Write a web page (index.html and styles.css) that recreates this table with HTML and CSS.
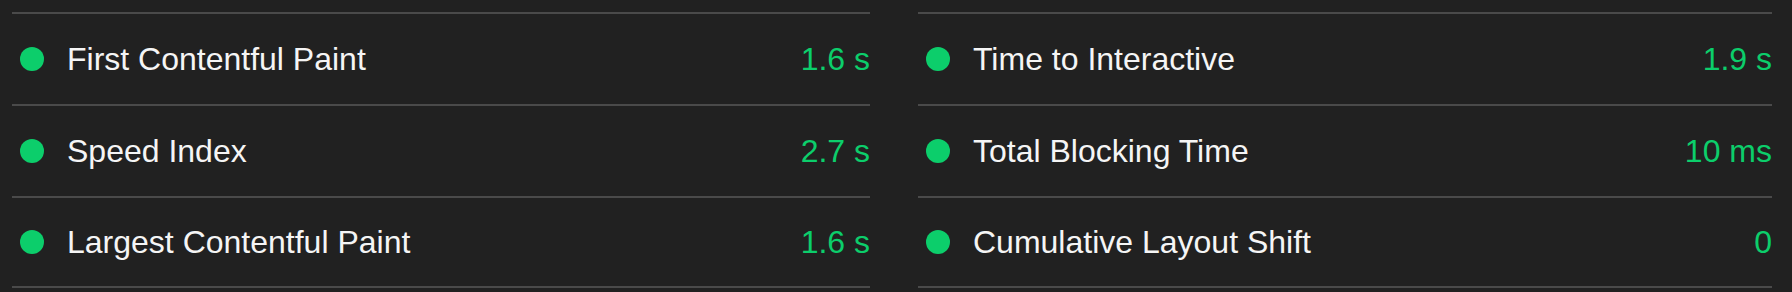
FILE: index.html
```html
<!DOCTYPE html>
<html lang="en">
<head>
<meta charset="utf-8">
<title>Metrics</title>
<link rel="stylesheet" href="styles.css">
</head>
<body>
<div class="metrics">
  <div class="col col-left">
    <div class="metric"><span class="dot"></span><span class="label">First Contentful Paint</span><span class="value">1.6 s</span></div>
    <div class="metric"><span class="dot"></span><span class="label">Speed Index</span><span class="value">2.7 s</span></div>
    <div class="metric last"><span class="dot"></span><span class="label">Largest Contentful Paint</span><span class="value">1.6 s</span></div>
  </div>
  <div class="col col-right">
    <div class="metric"><span class="dot"></span><span class="label">Time to Interactive</span><span class="value">1.9 s</span></div>
    <div class="metric"><span class="dot"></span><span class="label">Total Blocking Time</span><span class="value">10 ms</span></div>
    <div class="metric last"><span class="dot"></span><span class="label">Cumulative Layout Shift</span><span class="value">0</span></div>
  </div>
</div>
</body>
</html>
```
FILE: styles.css
```css
html, body {
  margin: 0;
  padding: 0;
  background: #212121;
}
body {
  font-family: "Liberation Sans", Arial, Helvetica, sans-serif;
  color: #f5f5f5;
  font-size: 32px;
}
.metrics {
  display: grid;
  grid-template-columns: 858px 854px;
  column-gap: 48px;
  padding: 12px 0 0 12px;
}
.col {
  display: flex;
  flex-direction: column;
}
.metric {
  display: flex;
  align-items: center;
  height: 90px;
  border-top: 2px solid #4a4a4a;
}
.metric.last {
  height: 88px;
  border-bottom: 2px solid #4a4a4a;
}
.dot {
  width: 24px;
  height: 24px;
  border-radius: 50%;
  background: #0cce6b;
  margin: 0 23px 0 8px;
  flex: none;
}
.label {
  flex: 1;
  white-space: nowrap;
}
.value {
  color: #0cce6b;
  white-space: nowrap;
}
```
